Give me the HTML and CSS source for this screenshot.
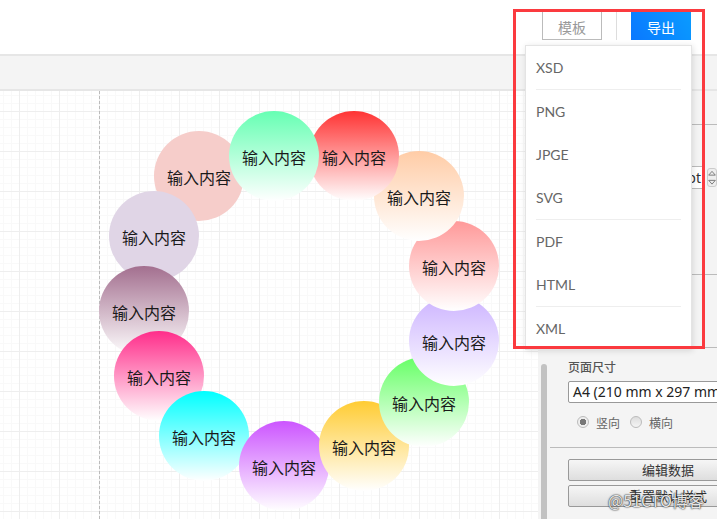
FILE: index.html
```html
<!DOCTYPE html>
<html lang="zh-CN">
<head>
  <meta charset="UTF-8" />
  <meta name="viewport" content="width=device-width, initial-scale=1.0" />
  <title>导出</title>
  <link rel="stylesheet" href="styles.css">
</head>
<body>
  <header class="topbar">
    <button class="btn-template">模板</button>
    <span class="topbar-divider"></span>
    <button class="btn-export">导出</button>
  </header>
  <div class="toolbar"></div>
  <div class="workspace">
    <main class="canvas">
      <div class="page-guide"></div>
      <div class="node node-pale">输入内容</div>
      <div class="node node-lilac">输入内容</div>
      <div class="node node-mauve">输入内容</div>
      <div class="node node-hot">输入内容</div>
      <div class="node node-cyan">输入内容</div>
      <div class="node node-violet">输入内容</div>
      <div class="node node-yellow">输入内容</div>
      <div class="node node-green">输入内容</div>
      <div class="node node-purple">输入内容</div>
      <div class="node node-coral">输入内容</div>
      <div class="node node-peach">输入内容</div>
      <div class="node node-red">输入内容</div>
      <div class="node node-mint">输入内容</div>
    </main>
    <div class="gutter"><div class="gutter-thumb"></div></div>
    <aside class="panel">
      <section class="panel-sec sec-head"></section>
      <section class="panel-sec sec-unit">
        <div class="unit-input">pt</div>
        <div class="spinner">
          <svg width="10" height="9" viewBox="0 0 10 9"><path d="M1.5 6.5 L5 2.5 L8.5 6.5 Z" fill="none" stroke="#777" /></svg>
          <svg width="10" height="9" viewBox="0 0 10 9"><path d="M1.5 2.5 L5 6.5 L8.5 2.5 Z" fill="none" stroke="#777" /></svg>
        </div>
      </section>
      <section class="panel-sec sec-blank"></section>
      <section class="panel-sec sec-page">
        <h3 class="sec-title">页面尺寸</h3>
        <div class="size-select">A4 (210 mm x 297 mm)</div>
        <div class="radio-row">
          <label class="radio-item"><span class="radio radio-on"></span><span class="radio-text">竖向</span></label>
          <label class="radio-item"><span class="radio"></span><span class="radio-text">横向</span></label>
        </div>
      </section>
      <section class="panel-sec sec-actions">
        <button class="btn-panel">编辑数据</button>
        <button class="btn-panel">重置默认样式</button>
      </section>
    </aside>
  </div>

  <ul class="export-menu">
    <li class="menu-item">XSD</li>
    <li class="menu-item has-line">PNG</li>
    <li class="menu-item">JPGE</li>
    <li class="menu-item">SVG</li>
    <li class="menu-item has-line">PDF</li>
    <li class="menu-item">HTML</li>
    <li class="menu-item has-line">XML</li>
  </ul>
  <div class="highlight-box"></div>
  <div class="watermark">@51CTO博客</div>
</body>
</html>
```

FILE: styles.css
```css
* {
  box-sizing: border-box;
}
html, body {
  height: 100%;
}
body {
  margin: 0;
  height: 519px;
  overflow: hidden;
  display: flex;
  flex-direction: column;
  position: relative;
  font-family: "Noto Sans CJK SC", sans-serif;
  background: #fff;
  color: #333;
}

/* top bar */
.topbar {
  height: 56px;
  flex: none;
  display: flex;
  align-items: flex-start;
  padding: 10px 26px 0 0;
  justify-content: flex-end;
  background: #fff;
  border-bottom: 2px solid #e6e6e6;
}
.btn-template, .btn-export {
  width: 60px;
  height: 30px;
  padding: 4px 0 0;
  font-family: inherit;
  font-size: 14px;
  border-radius: 0;
}
.btn-template {
  background: #fff;
  border: 1px solid #bbb;
  color: #999;
}
.topbar-divider {
  width: 1px;
  height: 30px;
  margin: 0 14px;
  background: #ddd;
}
.btn-export {
  border: 0;
  color: #fff;
  background: linear-gradient(60deg, #0a78ff, #0a9cff);
}
.toolbar {
  height: 35px;
  flex: none;
  background: #f4f4f4;
  border-bottom: 2px solid #e6e6e6;
}

/* work area */
.workspace {
  flex: 1;
  display: flex;
  min-height: 0;
  overflow: hidden;
}
.canvas {
  width: 538px;
  flex: none;
  position: relative;
  overflow: hidden;
  background-color: #fff;
  background-image:
    linear-gradient(#eeeeee 1px, transparent 1px),
    linear-gradient(90deg, #eeeeee 1px, transparent 1px),
    linear-gradient(#f9f9f9 1px, transparent 1px),
    linear-gradient(90deg, #f9f9f9 1px, transparent 1px);
  background-size: 40px 40px, 40px 40px, 8px 8px, 8px 8px;
  background-position: 0 20px, 19px 0, 0 4px, 3px 0;
}
.page-guide {
  position: absolute;
  left: 99px;
  top: 0;
  bottom: 0;
  border-left: 1px dashed #bbb;
}

/* circles on the canvas */
.node {
  position: absolute;
  width: 90px;
  height: 90px;
  padding-top: 1px;
  border-radius: 50%;
  display: flex;
  align-items: center;
  justify-content: center;
  font-size: 16px;
  color: #1a1a1a;
}
.node-pale { left: 154px; top: 40px; background: #f6cdca; }
.node-lilac { left: 109px; top: 100px; background: #e0d5e6; }
.node-mauve { left: 99px; top: 175px; background: linear-gradient(#a36f8f, #fff); }
.node-hot { left: 114px; top: 240px; background: linear-gradient(#ff2d8a, #fff); }
.node-cyan { left: 159px; top: 300px; background: linear-gradient(#00ffff, #fff); }
.node-violet { left: 239px; top: 330px; background: linear-gradient(#cc55ff, #fff); }
.node-yellow { left: 319px; top: 310px; background: linear-gradient(#ffcc33, #fff); }
.node-green { left: 379px; top: 266px; background: linear-gradient(#66ff66, #fff); }
.node-purple { left: 409px; top: 205px; background: linear-gradient(#ccb3ff, #fff); }
.node-coral { left: 409px; top: 130px; background: linear-gradient(#ff9999, #fff); }
.node-peach { left: 374px; top: 60px; background: linear-gradient(#ffcca6, #fff); }
.node-red { left: 309px; top: 20px; background: linear-gradient(#ff3333, #fff); }
.node-mint { left: 229px; top: 20px; background: linear-gradient(#66ffb3, #fff); }

.gutter {
  width: 12px;
  flex: none;
  overflow: hidden;
  padding: 273px 3px 0;
  background: #f4f4f4;
}
.gutter-thumb {
  height: 155px;
  border-radius: 3px 3px 0 0;
  background: #c2c2c2;
}

/* right side format panel */
.panel {
  flex: 1;
  min-width: 0;
  overflow: hidden;
  background: #f4f4f4;
  font-size: 12px;
}
.panel-sec {
  border-bottom: 1px solid #bbb;
  padding-left: 18px;
}
.sec-head { height: 34px; }
.sec-unit {
  height: 150px;
  padding: 41px 0 0 110px;
  display: flex;
  align-items: flex-start;
}
.unit-input {
  width: 45px;
  height: 23px;
  flex: none;
  text-align: right;
  padding-right: 3px;
  font-family: "Noto Sans", sans-serif;
  font-size: 14px;
  line-height: 21px;
  background: #fff;
  border-top: 1px solid #bbb;
  border-bottom: 1px solid #bbb;
  border-right: 1px solid #888;
}
.spinner {
  width: 10px;
  height: 19px;
  margin: 2px 0 0 2px;
  flex: none;
  display: flex;
  flex-direction: column;
  background: #eee;
  border: 1px solid #ccc;
  border-radius: 3px;
  overflow: hidden;
}
.spinner svg {
  display: block;
  margin-left: -1px;
}
.sec-blank { height: 73px; }
.sec-page { height: 100px; padding-top: 10px; }
.sec-title {
  margin: 0;
  font-size: 12px;
  line-height: 18px;
  font-weight: 500;
  color: #555;
}
.size-select {
  width: 200px;
  height: 22px;
  margin-top: 5px;
  padding-left: 4px;
  font-family: "Noto Sans", sans-serif;
  font-size: 14px;
  line-height: 20px;
  white-space: nowrap;
  overflow: hidden;
  color: #222;
  background: #fff;
  border: 1px solid #999;
  border-radius: 2px;
}
.radio-row {
  display: flex;
  gap: 10px;
  margin-top: 9px;
  padding-left: 9px;
}
.radio-item {
  display: flex;
  align-items: center;
  gap: 7px;
  color: #666;
  line-height: 16px;
}
.radio-text {
  padding-top: 3px;
}
.radio {
  width: 12px;
  height: 12px;
  border-radius: 50%;
  border: 1px solid #bbb;
  background: linear-gradient(#ddd, #f4f4f4);
}
.radio-on {
  background: radial-gradient(circle, #777 0 3px, #eee 3.5px);
}
.sec-actions {
  border-bottom: 0;
  padding-top: 11px;
  display: flex;
  flex-direction: column;
  gap: 4px;
}
.btn-panel {
  width: 200px;
  height: 22px;
  flex: none;
  padding: 0;
  font-family: inherit;
  font-size: 13px;
  line-height: 18px;
  color: #333;
  background: linear-gradient(#f6f6f6, #dedede);
  border: 1px solid #999;
  border-radius: 2px;
}

/* export dropdown */
.export-menu {
  position: absolute;
  left: 525px;
  top: 45px;
  width: 167px;
  height: 305px;
  margin: 0;
  padding: 0;
  list-style: none;
  display: grid;
  grid-auto-rows: 1fr;
  background: #fff;
  border: 1px solid #e4e4e4;
  box-shadow: 1px 1px 6px rgba(0, 0, 0, 0.12);
}
.menu-item {
  margin: 0 10px;
  padding-top: 1px;
  display: flex;
  align-items: center;
  font-family: Lato, sans-serif;
  font-size: 14px;
  color: #666;
}
.menu-item:first-child {
  padding-top: 0;
}
.has-line {
  border-top: 1px solid #eee;
}
.highlight-box {
  position: absolute;
  left: 513px;
  top: 9px;
  width: 192px;
  height: 340px;
  border: 3px solid #fb3a3f;
}
.watermark {
  position: absolute;
  left: 608px;
  top: 489px;
  font-size: 16px;
  line-height: 22px;
  white-space: nowrap;
  color: rgba(255, 255, 255, 0.9);
  text-shadow: 0 0 2px #222, 0 0 1px #222;
}
```
